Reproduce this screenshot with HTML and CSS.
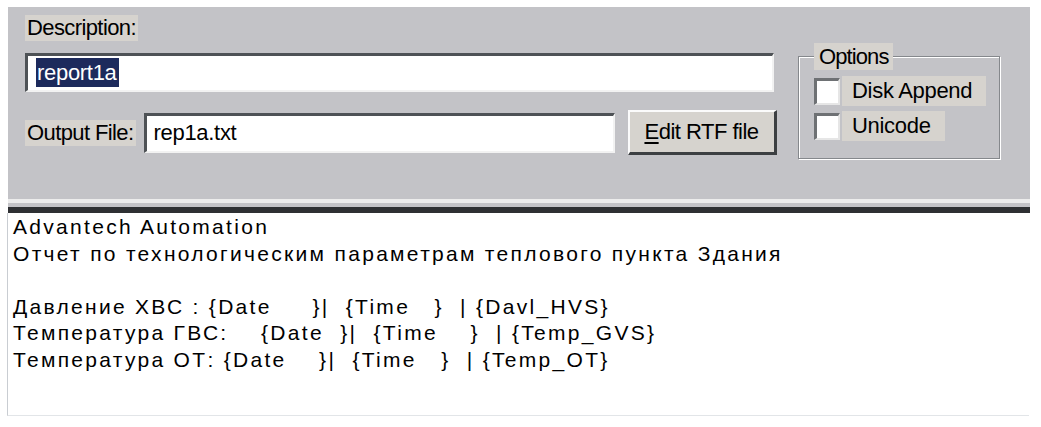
FILE: index.html
```html
<!DOCTYPE html>
<html lang="ru">
<head>
    <meta charset="UTF-8">
    <title>Report Setup</title>
    <link rel="stylesheet" href="styles.css">
</head>
<body>

    <div class="panel">
        <div class="main-col">
            <span class="label">Description:</span>
            <div class="field desc-field"><span class="selected">report1a</span></div>

            <div class="output-row">
                <span class="label">Output File:</span>
                <div class="field out-field">rep1a.txt</div>
                <button class="btn"><u>E</u>dit RTF file</button>
            </div>
        </div>

        <fieldset class="options">
            <legend>Options</legend>
            <div class="check-row">
                <span class="check"></span>
                <span class="check-label">Disk Append</span>
            </div>
            <div class="check-row">
                <span class="check"></span>
                <span class="check-label">Unicode</span>
            </div>
        </fieldset>
    </div>

    <div class="separator"></div>

    <div class="doc">
<div class="line">Advantech Automation</div>
<div class="line">Отчет по технологическим параметрам теплового пункта Здания</div>
<div class="line"> </div>
<div class="line">Давление ХВС : {Date     }|  {Time   }  | {Davl_HVS}</div>
<div class="line">Температура ГВС:    {Date  }|  {Time    }  | {Temp_GVS}</div>
<div class="line">Температура ОТ: {Date    }|  {Time   }  | {Temp_OT}</div>
    </div>

</body>
</html>
```

FILE: styles.css
```css
body {
    margin: 0;
    padding: 7px 0 0 8px;
    background: #ffffff;
    font-family: 'Liberation Sans', Arial, sans-serif;
    color: #000;
}

.panel {
    width: 1022px;
    height: 192px;
    box-sizing: border-box;
    background: #c3c3c7;
    padding: 8px 0 0 17px;
    display: flex;
    align-items: flex-start;
}

.main-col {
    width: 753px;
    display: flex;
    flex-direction: column;
    align-items: flex-start;
}

.label {
    display: inline-block;
    background: #d6d3ce;
    font-size: 22px;
    letter-spacing: -0.6px;
    height: 26px;
    line-height: 26px;
    padding: 0 2px;
}

.field {
    background: #fff;
    box-sizing: border-box;
    border-top: 3px solid #4e5256;
    border-left: 3px solid #4e5256;
    border-bottom: 2px solid #f2f2f2;
    border-right: 2px solid #f2f2f2;
    font-size: 22px;
    letter-spacing: -0.3px;
}

.desc-field {
    width: 749px;
    height: 39px;
    margin-top: 12px;
    padding: 2px 0 0 8px;
}

.selected {
    display: inline-block;
    background: #1d2a5c;
    color: #fff;
    height: 29px;
    line-height: 29px;
    padding: 0 2px 0 1px;
}

.output-row {
    display: flex;
    align-items: center;
    margin-top: 18px;
}

.out-field {
    width: 471px;
    height: 40px;
    margin-left: 8px;
    padding: 0 0 0 7px;
    line-height: 34px;
}

.btn {
    width: 149px;
    height: 45px;
    margin-left: 13px;
    background: #d6d3ce;
    font-family: 'Liberation Sans', Arial, sans-serif;
    font-size: 22px;
    letter-spacing: -0.5px;
    color: #000;
    border-top: 2px solid #fbfbfb;
    border-left: 2px solid #fbfbfb;
    border-bottom: 3px solid #3c3f42;
    border-right: 3px solid #3c3f42;
    padding: 0;
}

.btn u {
    text-underline-offset: 3px;
}

.options {
    margin: 28px 0 0 20px;
    padding: 6px 0 14px 15px;
    width: 202px;
    height: 116px;
    box-sizing: border-box;
    border: 1px solid #85888c;
    box-shadow: inset 1px 1px #fff, 1px 1px #fff;
}

.options legend {
    background: #d6d3ce;
    font-size: 22px;
    letter-spacing: -0.9px;
    height: 27px;
    line-height: 27px;
    padding: 0 4px 0 5px;
    margin-left: 0;
}

.check-row {
    display: flex;
    align-items: center;
    margin-bottom: 5px;
}

.check {
    width: 26px;
    height: 27px;
    box-sizing: border-box;
    background: #fff;
    border-top: 3px solid #6e7174;
    border-left: 3px solid #6e7174;
    border-bottom: 2px solid #e6e6e6;
    border-right: 2px solid #e6e6e6;
}

.check-label {
    background: #d6d3ce;
    margin-left: 2px;
    height: 30px;
    line-height: 30px;
    font-size: 22px;
    letter-spacing: -0.3px;
    padding: 0 14px 0 10px;
}

.separator {
    width: 1022px;
    height: 4px;
    background: #c3c3c7;
    border-top: 4px solid #ececec;
    border-bottom: 6px solid #2e3033;
}

.doc {
    width: 1022px;
    height: 203px;
    box-sizing: border-box;
    border-left: 1px solid #c9cdd2;
    border-bottom: 1px solid #e2e5e8;
    margin-left: -1px;
    padding: 1px 0 0 5px;
    font-size: 21px;
    letter-spacing: 2.3px;
    line-height: 26.6px;
}

.line {
    white-space: pre;
    height: 26.6px;
}
```
